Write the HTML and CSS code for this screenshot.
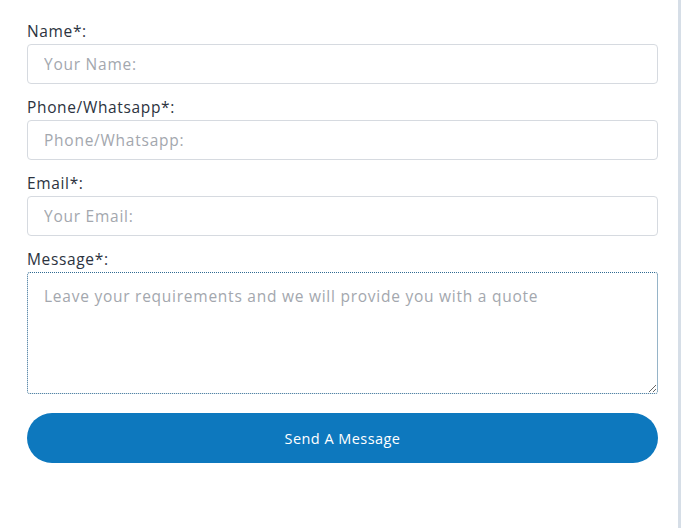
FILE: index.html
```html
<!DOCTYPE html>
<html>
<head>
<meta charset="utf-8">
<link rel="stylesheet" href="styles.css">
</head>
<body>
<div class="page">
  <form class="form">
    <div class="field">
      <label class="label">Name*:</label>
      <input class="input" type="text" placeholder="Your Name:">
    </div>
    <div class="field">
      <label class="label">Phone/Whatsapp*:</label>
      <input class="input" type="text" placeholder="Phone/Whatsapp:">
    </div>
    <div class="field">
      <label class="label">Email*:</label>
      <input class="input" type="text" placeholder="Your Email:">
    </div>
    <div class="field">
      <label class="label">Message*:</label>
      <textarea class="textarea" placeholder="Leave your requirements and we will provide you with a quote"></textarea>
    </div>
    <button class="button" type="button">Send A Message</button>
  </form>
</div>
</body>
</html>
```
FILE: styles.css
```css
html, body {
  margin: 0;
  padding: 0;
  background: #ffffff;
}
body {
  font-family: "Open Sans", "Noto Sans", sans-serif;
  color: #2f3542;
}
.page {
  width: 678px;
  min-height: 528px;
  border-right: 3px solid #d6dee7;
  box-sizing: content-box;
}
.form {
  display: flex;
  flex-direction: column;
  padding: 20px 0 0 27px;
  width: 631px;
}
.field {
  display: flex;
  flex-direction: column;
  margin-bottom: 12px;
}
.field:last-of-type {
  margin-bottom: 19px;
}
.label {
  font-size: 15.5px;
  line-height: 22px;
  letter-spacing: 0.65px;
  margin-bottom: 2px;
  color: #2c3340;
}
.input, .textarea {
  box-sizing: border-box;
  width: 631px;
  font-family: inherit;
  font-size: 15.5px;
  letter-spacing: 0.75px;
  color: #333;
  background: #fff;
  padding: 0 16px;
  margin: 0;
}
.input {
  height: 40px;
  border: 1px solid #d6dae0;
  border-radius: 4px;
  outline: none;
}
.textarea {
  height: 122px;
  border: 1px dotted #2f6a92;
  border-radius: 3px;
  padding-top: 12px;
  resize: vertical;
  outline: none;
}
.input::placeholder, .textarea::placeholder {
  color: #a3a7ae;
}
.button {
  height: 50px;
  width: 631px;
  border: none;
  border-radius: 25px;
  background: #0d78be;
  color: #fff;
  font-family: inherit;
  font-size: 14.5px;
  letter-spacing: 0.45px;
  font-weight: 500;
  cursor: pointer;
}
```
